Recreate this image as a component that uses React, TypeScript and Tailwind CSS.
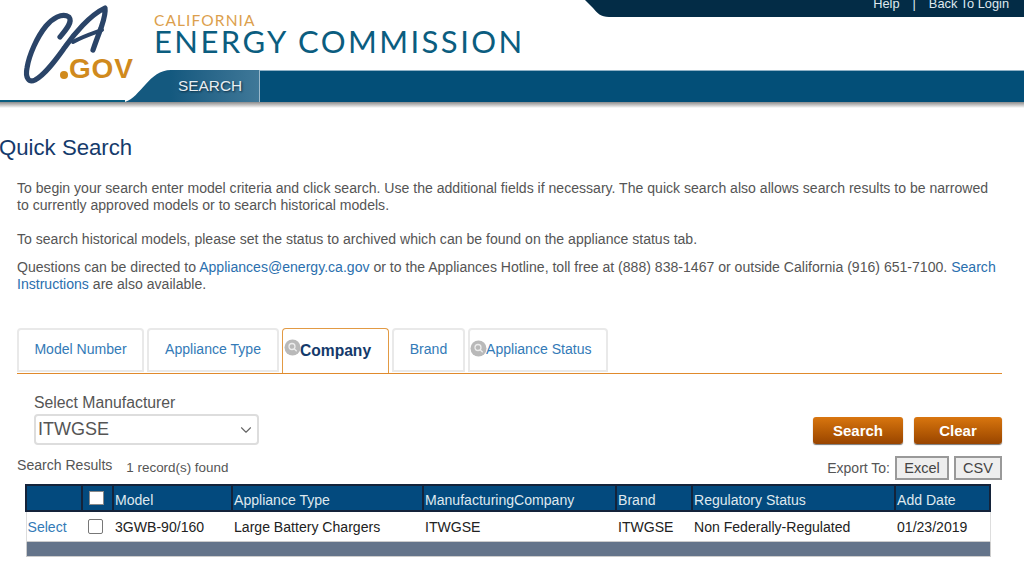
import React from 'react';
import { ChevronDown } from 'lucide-react';

const tabs = [
  { label: 'Model Number', width: 'w-[127px]' },
  { label: 'Appliance Type', width: 'w-[132px]' },
  { label: 'Company', width: 'w-[107px]', active: true, lens: true },
  { label: 'Brand', width: 'w-[73px]' },
  { label: 'Appliance Status', width: 'w-[140px]', lens: true },
];

const columns = [
  { label: '', width: 'w-[56px]' },
  { label: '', width: 'w-[31px]', check: true },
  { label: 'Model', width: 'w-[119px]' },
  { label: 'Appliance Type', width: 'w-[191px]' },
  { label: 'ManufacturingCompany', width: 'w-[193px]' },
  { label: 'Brand', width: 'w-[76px]' },
  { label: 'Regulatory Status', width: 'w-[203px]' },
  { label: 'Add Date', width: 'w-[95px]' },
];

const row = ['3GWB-90/160', 'Large Battery Chargers', 'ITWGSE', 'ITWGSE', 'Non Federally-Regulated', '01/23/2019'];

function Lens({ active }: { active?: boolean }) {
  return (
    <svg viewBox="0 0 17 17" className={`absolute ${active ? 'left-[1px]' : 'left-0'} top-[10px] w-[17px] h-[17px]`}>
      <circle cx="8.5" cy="8.5" r="8" fill="#b9b9b9" />
      <circle cx="8" cy="7.5" r="3" fill="none" stroke="#ececec" strokeWidth="1.3" />
      <path d="M10.2 9.8l2.5 2.4" stroke="#ececec" strokeWidth="1.3" />
    </svg>
  );
}

function Logo() {
  return (
    <svg viewBox="0 0 135 90" className="absolute left-0 top-0 w-[135px] h-[90px]">
      <path
        d="M60 37C66 30 73 22 69 17C62 12 52 19 46 26C37 37 29 55 27 68C25 78 29 83 35 80C46 74 57 58 65 47C74 34 90 15 105 8C106 14 103 22 101 28C98 36 95 44 93 50"
        fill="none"
        stroke="#2a4468"
        strokeWidth="5.2"
        strokeLinecap="round"
        strokeLinejoin="round"
      />
      <path d="M73 42C84 36 94 33 102 30" fill="none" stroke="#2a4468" strokeWidth="4" strokeLinecap="round" />
      <circle cx="64" cy="75" r="4" fill="#d08a1d" />
      <text x="69" y="78" fontFamily="'Liberation Sans', sans-serif" fontWeight="700" fontSize="28" letterSpacing="0.8" fill="#d08a1d">
        GOV
      </text>
    </svg>
  );
}

export default function App() {
  return (
    <div className="w-[1024px] h-[568px] overflow-hidden bg-white font-['Liberation_Sans',Arial,sans-serif] text-[14.07px] text-[#555]">
      <header className="relative h-[108px]">
        <div className="flex h-[70px]">
          <div className="w-[154px]" />
          <div className="font-['Lato',sans-serif] text-[#0b5d7f] pt-[13px]">
            <div className="text-[15.5px] leading-[15px] tracking-[1.1px] text-[#dc9f4d]">CALIFORNIA</div>
            <div className="text-[31px] leading-[26px] tracking-[2.45px] whitespace-nowrap">ENERGY COMMISSION</div>
          </div>
          <div className="ml-auto flex items-start">
            <svg viewBox="0 0 30 17" className="w-[30px] h-[17px]">
              <path d="M0 0H30V17H24C16 17 12 13 8 8Z" fill="#032c46" />
            </svg>
            <div className="w-[409px] h-[17px] overflow-hidden bg-[#032c46] flex items-start justify-end gap-[13px] pr-[15px] text-[12.8px] leading-[8px] text-[#dfe8ee]">
              <span>Help</span>
              <span>|</span>
              <span>Back To Login</span>
            </div>
          </div>
        </div>
        <div className="flex h-[32px]">
          <div className="w-[125px] border-b-2 border-[#0b5d7f]" />
          <svg viewBox="0 0 46 32" preserveAspectRatio="none" className="w-[46px] h-[32px]">
            <path d="M0 32C16 27 24 0 46 0V32Z" fill="#14597f" />
          </svg>
          <div className="w-[89px] bg-gradient-to-r from-[#14597f] to-[#3f7898] border-r border-[#9bb9cb] flex items-center text-[15.4px] text-[#e8eef2] [text-shadow:1px_1px_2px_#0a2a3e]">
            <span className="ml-[7px] -mt-[1px]">SEARCH</span>
          </div>
          <div className="flex-1 bg-[#034f78] border-t border-[#8fb1c6]" />
        </div>
        <div className="h-[6px] bg-gradient-to-b from-[#8c8c8c] to-white" />
        <Logo />
      </header>

      <h1 className="text-[22.2px] leading-[26px] text-[#143a6b] mt-[27px] -ml-[1px]">Quick Search</h1>

      <div className="px-[17px] mt-[19px] leading-[17px]">
        <p className="pr-[10px]">
          To begin your search enter model criteria and click search. Use the additional fields if necessary. The quick search also allows search results to be narrowed to currently approved models or to search historical models.
        </p>
        <p className="mt-[17px]">To search historical models, please set the status to archived which can be found on the appliance status tab.</p>
        <p className="mt-[11px]">
          Questions can be directed to <span className="text-[#2a6fae]">Appliances@energy.ca.gov</span> or to the Appliances Hotline, toll free at (888) 838-1467 or outside California (916) 651-7100. <span className="text-[#2a6fae]">Search Instructions</span> are also available.
        </p>

        <nav className="mt-[35px] w-[985px] h-[46px] flex gap-[3px] border-b border-[#e08a2c]">
          {tabs.map((tab) => (
            <div
              key={tab.label}
              className={
                tab.active
                  ? `relative ${tab.width} h-[45px] bg-white border border-b-0 border-[#e29a44] rounded-t-[4px] flex items-center pl-[17px] pb-[2px] text-[15.6px] font-bold text-[#143a6b]`
                  : `relative ${tab.width} h-[44px] bg-white border-2 border-[#e9e9e9] rounded-t-[4px] flex items-center pb-[2px] ${tab.lens ? 'pl-[16px]' : 'justify-center'} text-[#337ab7]`
              }
            >
              {tab.lens && <Lens active={tab.active} />}
              <span>{tab.label}</span>
            </div>
          ))}
        </nav>

        <div className="flex items-start justify-between w-[985px] mt-[20px]">
          <div className="ml-[17px]">
            <div className="text-[15.8px] leading-[18px]">Select Manufacturer</div>
            <div className="w-[225px] h-[31px] mt-[2px] border-2 border-[#ddd] rounded-[4px] flex items-center justify-between pl-[2px] pr-[2px] text-[18px]">
              <span>ITWGSE</span>
              <ChevronDown className="w-[18px] h-[18px] text-[#666]" strokeWidth={1.5} />
            </div>
          </div>
          <div className="flex gap-[11px] mt-[23px]">
            <button className="w-[90px] h-[27px] rounded-[3px] bg-gradient-to-b from-[#d9760f] to-[#994500] shadow-[0_1px_1px_#777] text-white font-bold text-[15px]">Search</button>
            <button className="w-[88px] h-[27px] rounded-[3px] bg-gradient-to-b from-[#d9760f] to-[#994500] shadow-[0_1px_1px_#777] text-white font-bold text-[15px]">Clear</button>
          </div>
        </div>

        <div className="flex items-center w-[985px] mt-[11px] h-[24px]">
          <span className="-mt-[5px]">Search Results</span>
          <span className="ml-[14px] text-[13.4px] -mt-[1px]">1 record(s) found</span>
          <span className="ml-auto mr-[5px] text-[14px] mt-[1px]">Export To:</span>
          <button className="w-[54px] h-[24px] bg-[#eee] border-2 border-[#999] text-[#444] text-[14.5px]">Excel</button>
          <button className="ml-[5px] w-[48px] h-[24px] bg-[#eee] border-2 border-[#999] text-[#444] text-[14.5px]">CSV</button>
        </div>

        <table className="ml-[8px] mt-[4px] w-[964px] table-fixed border-collapse">
          <thead>
            <tr className="h-[26px] bg-[#034a7e] text-[#dfe8ee]">
              {columns.map((col, index) => (
                <th key={index} className={`${col.width} border-2 border-[#14233a] pl-[1px] pt-[5px] text-left font-normal`}>
                  {col.check && <span className="block -mt-[5px] ml-[5px] w-[15px] h-[14px] bg-white border border-[#888]" />}
                  {col.label}
                </th>
              ))}
            </tr>
          </thead>
          <tbody>
            <tr className="h-[30px] text-[#222] border-x border-[#ddd]">
              <td className="pl-[1px] pt-[2px] text-[#337ab7]">Select</td>
              <td className="pl-[6px]">
                <span className="block w-[15px] h-[15px] bg-white border border-[#777] rounded-[2px]" />
              </td>
              {row.map((cell, index) => (
                <td key={index} className="pl-[2px] pt-[2px] whitespace-nowrap">{cell}</td>
              ))}
            </tr>
            <tr className="h-[15px] bg-[#64748a] border border-[#ccc]">
              <td colSpan={8} />
            </tr>
          </tbody>
        </table>
      </div>
    </div>
  );
}
